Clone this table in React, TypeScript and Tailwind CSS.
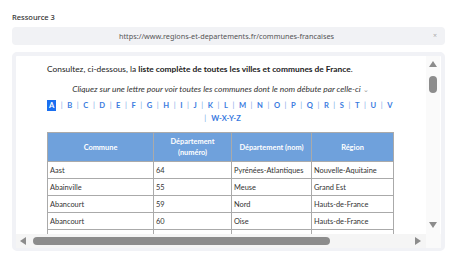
const letters = ['A','B','C','D','E','F','G','H','I','J','K','L','M','N','O','P','Q','R','S','T','U','V'];

const rows = [
  ['Aast', '64', 'Pyrénées-Atlantiques', 'Nouvelle-Aquitaine'],
  ['Abainville', '55', 'Meuse', 'Grand Est'],
  ['Abancourt', '59', 'Nord', 'Hauts-de-France'],
  ['Abancourt', '60', 'Oise', 'Hauts-de-France'],
  ['', '', '', ''],
];

const Tri = ({ dir }: { dir: 'up' | 'down' | 'left' | 'right' }) => {
  const pts = {
    up: '0,6 4,0 8,6',
    down: '0,0 8,0 4,6',
    left: '6,0 6,8 0,4',
    right: '0,0 0,8 6,4',
  }[dir];
  const w = dir === 'up' || dir === 'down' ? 8 : 6;
  const h = dir === 'up' || dir === 'down' ? 6 : 8;
  return (
    <svg width={w} height={h} viewBox={`0 0 ${w} ${h}`}>
      <polygon points={pts} fill="#8c8c8c" />
    </svg>
  );
};

const Sep = () => <span className="font-normal text-[#7aa7e8]">|</span>;

export default function App() {
  return (
    <div className="h-[259px] w-[457px] bg-white px-3 pt-[11px] font-['Lato',sans-serif]">
      <div className="font-['Noto_Sans',sans-serif] text-[7.5px] font-medium leading-[12px] text-[#333]">Ressource 3</div>
      <div className="mt-[4px] flex h-[18px] items-center rounded-[4px] bg-[#f1f2f5] px-2 font-['Noto_Sans',sans-serif] text-[7.3px] text-[#555]">
        <span className="flex-1 text-center">https://www.regions-et-departements.fr/communes-francaises</span>
        <span className="text-[7px] text-[#aaa]">×</span>
      </div>
      <div className="mt-[7px] h-[199px] rounded-[5px] border-4 border-[#f1f2f6] bg-white">
        <div className="flex h-[178px]">
          <div className="w-[410px] overflow-hidden pl-[31px] pt-[7px]">
            <div className="w-[347px]">
              <p className="whitespace-nowrap text-[8.4px] leading-[12px] text-[#222]">
                Consultez, ci-dessous, la <b>liste complète de toutes les villes et communes de France</b>.
              </p>
              <p className="mt-[8px] whitespace-nowrap text-center text-[8.4px] italic leading-[12px] text-[#333]">
                Cliquez sur une lettre pour voir toutes les communes dont le nom débute par celle-ci <span className="not-italic text-[7px] text-[#999]">⌄</span>
              </p>
              <div className="mt-[3.5px] text-[7.6px] font-bold leading-[13px] text-[#3a7be0]">
                <div className="flex w-[346px] items-center justify-between">
                  {letters.map((l, i) => (
                    <span key={l} className="contents">
                      {i > 0 && <Sep />}
                      {i === 0 ? (
                        <span className="bg-[#1a6ff0] px-[2px] leading-[11px] text-white">A</span>
                      ) : (
                        <span>{l}</span>
                      )}
                    </span>
                  ))}
                </div>
                <div className="flex justify-center gap-[5px] pl-[4px]">
                  <Sep />
                  <span>W-X-Y-Z</span>
                </div>
              </div>
              <table className="mt-[7.5px] w-[347px] border-collapse text-[7.4px]">
                <thead>
                  <tr className="h-[29px] bg-[#6fa1dc] text-white">
                    <th className="w-[106px] border border-[#aaa] font-bold leading-[11px]">Commune</th>
                    <th className="w-[78px] border border-[#aaa] font-bold leading-[11px]">Département<br />(numéro)</th>
                    <th className="w-[80px] border border-[#aaa] font-bold leading-[11px]">Département (nom)</th>
                    <th className="border border-[#aaa] font-bold leading-[11px]">Région</th>
                  </tr>
                </thead>
                <tbody>
                  {rows.map((r, i) => (
                    <tr key={i} className="h-[17px] text-[#333]">
                      {r.map((c, j) => (
                        <td key={j} className="whitespace-nowrap border border-[#aaa] px-[2px] leading-[11px]">{c}</td>
                      ))}
                    </tr>
                  ))}
                </tbody>
              </table>
            </div>
          </div>
          <div className="flex w-[14px] flex-col items-center bg-[#fafafa] pt-[5px]">
            <Tri dir="up" />
            <div className="mt-[9px] h-[17px] w-[8px] rounded-full bg-[#8c8c8c]" />
            <div className="flex-1" />
            <div className="mb-[6px]"><Tri dir="down" /></div>
          </div>
        </div>
        <div className="flex h-[14px] items-center">
          <div className="flex h-[14px] w-[410px] items-center bg-[#f5f5f5] pl-[4px] pr-[5px]">
            <Tri dir="left" />
            <div className="ml-[7px] h-[8px] w-[297px] rounded-full bg-[#8c8c8c]" />
            <div className="flex-1" />
            <Tri dir="right" />
          </div>
          <div className="h-[14px] flex-1 bg-[#fafafa]" />
        </div>
      </div>
    </div>
  );
}
